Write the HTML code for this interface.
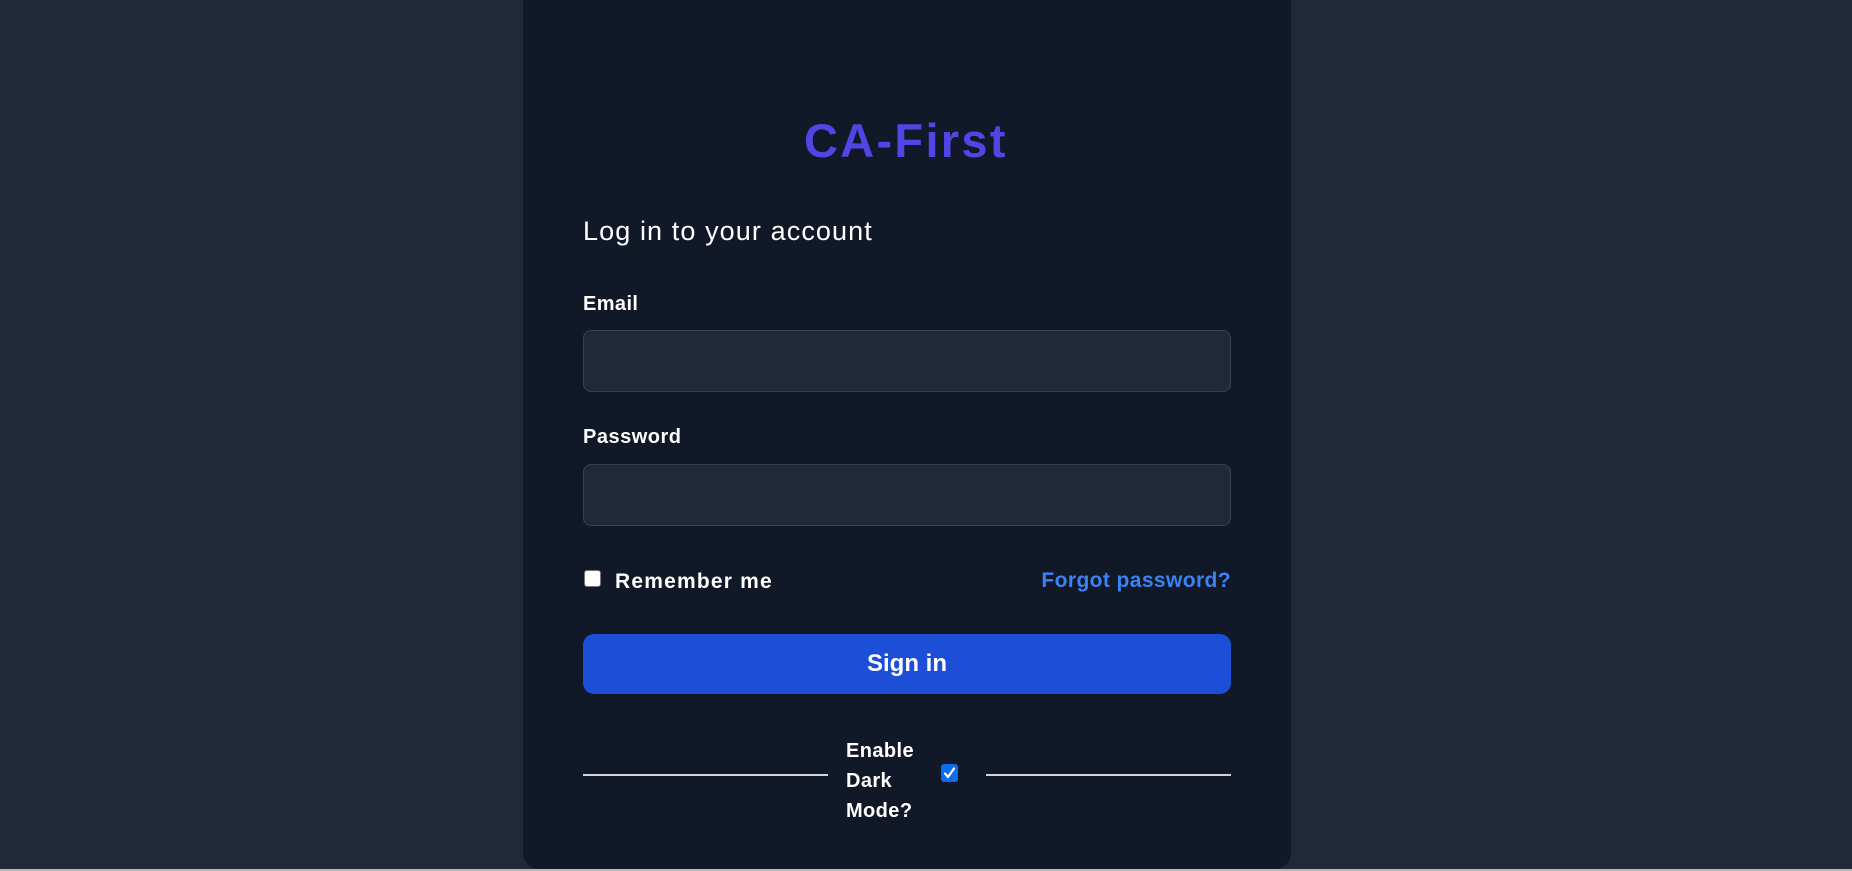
<!DOCTYPE html>
<html><head><meta charset="utf-8"><style>
html,body{margin:0;padding:0}
body{width:1852px;height:871px;background:#1f2937;position:relative;overflow:hidden;font-family:"Liberation Sans",Arial,sans-serif;color:#fff}
.bar{position:absolute;left:0;top:869px;width:1852px;height:2px;background:#b8b8b8}
.card{position:absolute;left:523px;top:-20px;width:768px;height:889px;background:#111827;border-radius:16px}
.t{position:absolute;white-space:nowrap;line-height:1}
.inp{position:absolute;left:583px;width:646px;background:#1f2937;border:1px solid #374151;border-radius:8px}
.cb{position:absolute;width:15px;height:15px;border-radius:3px}
.line{position:absolute;top:774px;height:2px;background:#d1d5db}
</style></head><body>
<div class="card"></div>
<div class="t" style="left:804px;top:117px;font-size:47px;font-weight:bold;color:#4f46e5;letter-spacing:2.3px">CA-First</div>
<div class="t" style="left:583px;top:218px;font-size:27px;letter-spacing:1.1px">Log in to your account</div>
<div class="t" style="left:583px;top:294px;font-size:20px;font-weight:bold;letter-spacing:0.4px">Email</div>
<div class="inp" style="top:330px;height:60px"></div>
<div class="t" style="left:583px;top:427px;font-size:20px;font-weight:bold;letter-spacing:0.5px">Password</div>
<div class="inp" style="top:464px;height:60px"></div>
<div class="cb" style="left:584px;top:570px;background:#fff;border:1px solid #767676"></div>
<div class="t" style="left:615px;top:571px;font-size:21px;font-weight:bold;letter-spacing:1.2px">Remember me</div>
<div class="t" style="right:621px;top:570px;font-size:21px;font-weight:bold;color:#3b82f6;letter-spacing:0.4px">Forgot password?</div>
<div style="position:absolute;left:583px;top:634px;width:648px;height:60px;background:#1d4ed8;border-radius:11px"></div>
<div class="t" style="left:583px;width:648px;text-align:center;top:652px;font-size:24px;font-weight:bold">Sign in</div>
<div class="line" style="left:583px;width:245px"></div>
<div class="line" style="left:986px;width:245px"></div>
<div class="t" style="left:846px;top:736px;font-size:20px;font-weight:bold;line-height:30px;letter-spacing:0.4px">Enable<br>Dark<br>Mode?</div>
<div class="cb" style="left:941px;top:764px;width:17px;height:18px;background:#0b6cf0"><svg width="17" height="18" viewBox="0 0 17 18"><path d="M4 9.5 L7 13 L13 4.5" fill="none" stroke="#fff" stroke-width="2.2" stroke-linecap="round" stroke-linejoin="round"/></svg></div>
<div class="bar"></div>
</body></html>
